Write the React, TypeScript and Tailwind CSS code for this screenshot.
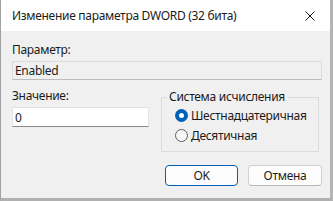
import React from "react";

export default function App() {
  const font = { fontFamily: '"Noto Sans", "Open Sans", Arial, sans-serif' };
  return (
    <div className="w-[333px] h-[201px] bg-white overflow-hidden" style={font}>
      <div className="w-[333px] h-[201px] flex flex-col border-l border-l-[#a0a0a0] border-r-[3px] border-r-[#b4b4b4] border-b-[3px] border-b-[#b0b0b0] bg-[#f0f0f0] text-[12px] text-[#1b1b1b] tracking-[-0.3px]">
        {/* title bar */}
        <div className="h-[31px] bg-white flex items-center pl-[11px] pr-[10px] shrink-0">
          <span className="leading-[15px]">Изменение параметра DWORD (32 бита)</span>
          <div className="ml-auto w-[10px] h-[10px] mr-[5px]">
            <svg width="10" height="10" viewBox="0 0 10 10">
              <path d="M0.5 0.5 L9.5 9.5 M9.5 0.5 L0.5 9.5" stroke="#1b1b1b" strokeWidth="1" />
            </svg>
          </div>
        </div>
        {/* content */}
        <div className="px-[11px] pt-[11px] flex flex-col">
          <div className="h-[15px] leading-[15px]">Параметр:</div>
          <div className="mt-[4px] h-[19px] w-[310px] border border-[#dcdcdc] border-b-[#bcbcbc] bg-[#f0f0f0] flex items-center pl-[2px] leading-[15px]">
            Enabled
          </div>
          <div className="mt-[8px] flex gap-[12px]">
            <div className="w-[137px] flex flex-col">
              <div className="h-[15px] leading-[15px]">Значение:</div>
              <div className="mt-[4px] h-[20px] w-[137px] border border-[#e3e3e3] border-b-[#8a8a8a] bg-white flex items-center pl-[2px] leading-[15px]">
                0
              </div>
            </div>
            <div className="mt-[9px] w-[161px] h-[55px] border border-[#dcdcdc] relative pt-[7px] pl-[13px]">
              <div className="absolute left-[5px] top-[-9px] bg-[#f0f0f0] px-[2px] h-[15px] leading-[15px]">
                Система исчисления
              </div>
              <div className="h-[20px] flex items-center gap-[3px]">
                <div className="w-[13px] h-[13px] rounded-full bg-[#005fb8] flex items-center justify-center">
                  <div className="w-[5px] h-[5px] rounded-full bg-white" />
                </div>
                <span className="leading-[15px]">Шестнадцатеричная</span>
              </div>
              <div className="h-[20px] flex items-center gap-[3px]">
                <div className="w-[13px] h-[13px] rounded-full border border-[#5f5f5f] bg-[#f7f7f7]" />
                <span className="leading-[15px]">Десятичная</span>
              </div>
            </div>
          </div>
          <div className="mt-[13px] flex justify-end gap-[10px] w-[310px]">
            <div className="w-[73px] h-[21px] rounded-[4px] border border-[#005fb8] bg-[#fdfdfd] flex items-center justify-center leading-[15px]">
              OK
            </div>
            <div className="w-[74px] h-[21px] rounded-[4px] border border-[#d0d0d0] border-b-[#b8b8b8] bg-[#fdfdfd] flex items-center justify-center leading-[15px]">
              Отмена
            </div>
          </div>
        </div>
      </div>
    </div>
  );
}
